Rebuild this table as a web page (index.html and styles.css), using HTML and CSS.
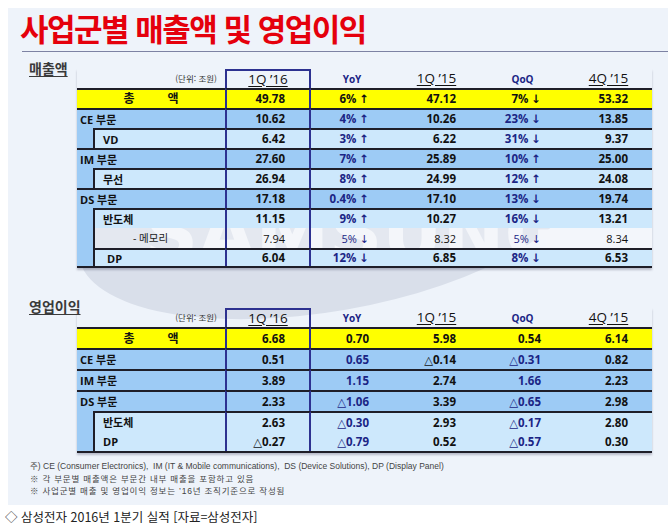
FILE: index.html
```html
<!DOCTYPE html>
<html lang="ko">
<head>
<meta charset="utf-8">
<title>사업군별 매출액 및 영업이익</title>
<link rel="stylesheet" href="styles.css">
</head>
<body>
<div class="page">
  <div class="panel">
    <svg class="watermark" width="660" height="497" viewBox="0 0 660 497" aria-hidden="true">
      <ellipse cx="322" cy="205" rx="255" ry="98" transform="rotate(-10 322 205)" class="wm-shape"/>
      <text x="347" y="252" text-anchor="middle" class="wm-text">SAMSUNG</text>
    </svg>
    <div class="content">
      <h1 class="title">사업군별 매출액 및 영업이익</h1>
      <div class="rule"></div>

      <section class="sec sec1">
        <h2 class="sec-title">매출액</h2>
        <div class="tbl t1">
          <div class="c lbl unit">(단위: 조원)</div>
          <div class="c hd q1 top"><span class="u">1Q ’16</span></div>
          <div class="c hd"><span class="sm">YoY</span></div>
          <div class="c hd"><span class="u">1Q ’15</span></div>
          <div class="c hd"><span class="sm">QoQ</span></div>
          <div class="c hd"><span class="u">4Q ’15</span></div>

          <div class="c lbl tot bt center"><span class="gap">총</span><span>액</span></div>
          <div class="c tot bt q1">49.78</div>
          <div class="c tot bt">6% ↑</div>
          <div class="c tot bt">47.12</div>
          <div class="c tot bt">7% ↓</div>
          <div class="c tot bt">53.32</div>

          <div class="c lbl grp bt">CE 부문</div>
          <div class="c grp bt q1">10.62</div>
          <div class="c grp bt n">4% ↑</div>
          <div class="c grp bt">10.26</div>
          <div class="c grp bt n">23% ↓</div>
          <div class="c grp bt">13.85</div>

          <div class="strip s1"></div>
          <div class="c sl sub bt">VD</div>
          <div class="c sub bt q1">6.42</div>
          <div class="c sub bt n">3% ↑</div>
          <div class="c sub bt">6.22</div>
          <div class="c sub bt n">31% ↓</div>
          <div class="c sub bt">9.37</div>

          <div class="c lbl grp bt">IM 부문</div>
          <div class="c grp bt q1">27.60</div>
          <div class="c grp bt n">7% ↑</div>
          <div class="c grp bt">25.89</div>
          <div class="c grp bt n">10% ↑</div>
          <div class="c grp bt">25.00</div>

          <div class="strip s1"></div>
          <div class="c sl sub bt">무선</div>
          <div class="c sub bt q1">26.94</div>
          <div class="c sub bt n">8% ↑</div>
          <div class="c sub bt">24.99</div>
          <div class="c sub bt n">12% ↑</div>
          <div class="c sub bt">24.08</div>

          <div class="c lbl grp bt">DS 부문</div>
          <div class="c grp bt q1">17.18</div>
          <div class="c grp bt n">0.4% ↑</div>
          <div class="c grp bt">17.10</div>
          <div class="c grp bt n">13% ↓</div>
          <div class="c grp bt">19.74</div>

          <div class="strip s3"></div>
          <div class="c sl sub bt">반도체</div>
          <div class="c sub bt q1">11.15</div>
          <div class="c sub bt n">9% ↑</div>
          <div class="c sub bt">10.27</div>
          <div class="c sub bt n">16% ↓</div>
          <div class="c sub bt">13.21</div>

          <div class="c sl mem memlbl">- 메모리</div>
          <div class="c mem q1">7.94</div>
          <div class="c mem n">5% ↓</div>
          <div class="c mem">8.32</div>
          <div class="c mem n">5% ↓</div>
          <div class="c mem">8.34</div>

          <div class="c sl sub bt dp">DP</div>
          <div class="c sub bt q1">6.04</div>
          <div class="c sub bt n">12% ↓</div>
          <div class="c sub bt">6.85</div>
          <div class="c sub bt n">8% ↓</div>
          <div class="c sub bt">6.53</div>
        </div>
      </section>

      <section class="sec sec2">
        <h2 class="sec-title">영업이익</h2>
        <div class="tbl t2">
          <div class="c lbl unit">(단위: 조원)</div>
          <div class="c hd q1 top"><span class="u">1Q ’16</span></div>
          <div class="c hd"><span class="sm">YoY</span></div>
          <div class="c hd"><span class="u">1Q ’15</span></div>
          <div class="c hd"><span class="sm">QoQ</span></div>
          <div class="c hd"><span class="u">4Q ’15</span></div>

          <div class="c lbl tot bt center"><span class="gap">총</span><span>액</span></div>
          <div class="c tot bt q1">6.68</div>
          <div class="c tot bt">0.70</div>
          <div class="c tot bt">5.98</div>
          <div class="c tot bt">0.54</div>
          <div class="c tot bt">6.14</div>

          <div class="c lbl grp bt">CE 부문</div>
          <div class="c grp bt q1">0.51</div>
          <div class="c grp bt n">0.65</div>
          <div class="c grp bt">△0.14</div>
          <div class="c grp bt n">△0.31</div>
          <div class="c grp bt">0.82</div>

          <div class="c lbl grp bt">IM 부문</div>
          <div class="c grp bt q1">3.89</div>
          <div class="c grp bt n">1.15</div>
          <div class="c grp bt">2.74</div>
          <div class="c grp bt n">1.66</div>
          <div class="c grp bt">2.23</div>

          <div class="c lbl grp bt">DS 부문</div>
          <div class="c grp bt q1">2.33</div>
          <div class="c grp bt n">△1.06</div>
          <div class="c grp bt">3.39</div>
          <div class="c grp bt n">△0.65</div>
          <div class="c grp bt">2.98</div>

          <div class="strip s2"></div>
          <div class="c sl sub bt">반도체</div>
          <div class="c sub bt q1">2.63</div>
          <div class="c sub bt n">△0.30</div>
          <div class="c sub bt">2.93</div>
          <div class="c sub bt n">△0.17</div>
          <div class="c sub bt">2.80</div>

          <div class="c sl sub">DP</div>
          <div class="c sub q1">△0.27</div>
          <div class="c sub n">△0.79</div>
          <div class="c sub">0.52</div>
          <div class="c sub n">△0.57</div>
          <div class="c sub">0.30</div>
        </div>
      </section>

      <div class="notes">
        <p>주) CE (Consumer Electronics),&nbsp; IM (IT &amp; Mobile communications),&nbsp; DS (Device Solutions), DP (Display Panel)</p>
        <p class="ko">※ 각 부문별 매출액은 부문간 내부 매출을 포함하고 있음</p>
        <p class="ko">※ 사업군별 매출 및 영업이익 정보는 ’16년 조직기준으로 작성됨</p>
      </div>
    </div>
  </div>
  <p class="caption">◇ 삼성전자 2016년 1분기 실적 [자료=삼성전자]</p>
</div>
</body>
</html>
```

FILE: styles.css
```css
html, body {
  margin: 0;
  padding: 0;
  background: #ffffff;
}

body {
  font-family: "Open Sans", "DejaVu Sans", "Noto Sans CJK KR", sans-serif;
  color: #111;
}

.page {
  width: 668px;
}

.panel {
  position: relative;
  margin: 8px 0 0 8px;
  width: 660px;
  height: 497px;
  padding-top: 2px;
  box-sizing: border-box;
  background: #eef3fa;
}

.watermark {
  position: absolute;
  left: 0;
  top: 0;
  z-index: 0;
}

.wm-shape {
  fill: #d9dfea;
}

.wm-text {
  font-family: "DejaVu Sans", sans-serif;
  font-weight: 700;
  font-size: 74px;
  fill: #f0f3f8;
}

.content {
  position: relative;
  z-index: 1;
}

.title {
  margin: 0 0 0 12px;
  font-family: "Noto Sans CJK KR", sans-serif;
  font-weight: 700;
  font-size: 31px;
  line-height: 36px;
  letter-spacing: -1.5px;
  color: #e5000c;
  white-space: nowrap;
}

.rule {
  margin: 5px 0 0 14px;
  height: 1px;
  background: #7d82a3;
}

.sec {
  display: flex;
  align-items: flex-start;
}

.sec1 {
  margin-top: 8px;
}

.sec2 {
  margin-top: 30px;
}

.sec-title {
  flex: 0 0 48px;
  width: 48px;
  margin: 0 0 0 21px;
  font-family: "Noto Sans CJK KR", sans-serif;
  font-weight: 700;
  font-size: 14px;
  line-height: 16px;
  color: #3a3a3a;
  text-decoration: underline;
  text-underline-offset: 2px;
  white-space: nowrap;
}

.tbl {
  display: grid;
  grid-template-columns: 16px 132px 86px 82px 87px 85px 87px;
  border-bottom: 2px solid #1e1e28;
  box-shadow: 0 2px 2px rgba(60, 60, 90, 0.3);
}

.t1 {
  margin-top: 9px;
  grid-template-rows: 19px repeat(8, 20px) 18px;
}

.t2 {
  margin-top: 10px;
  grid-template-rows: 19px repeat(5, 21px) 19px;
}

.c {
  box-sizing: border-box;
  display: flex;
  align-items: center;
  justify-content: flex-end;
  padding-right: 24px;
  white-space: nowrap;
  font-family: "Open Sans", "DejaVu Sans", "Noto Sans CJK KR", sans-serif;
  font-weight: 700;
  font-size: 11.5px;
  line-height: 1;
  color: #111;
}

.n {
  color: #1b2585;
}

.bt {
  border-top: 2px solid #1e1e28;
}

.q1 {
  border-left: 2px solid #2d3190;
  border-right: 2px solid #2d3190;
}

.q1.top {
  border-top: 2px solid #2d3190;
}

.tot {
  background: #ffff00;
}

.grp {
  background: #9dcbf5;
}

.sub {
  background: #cde8fc;
}

.mem {
  background: rgba(255, 255, 255, 0.3);
  font-weight: 400;
  font-size: 11px;
}

.strip {
  background: #9dcbf5;
}

.s1 { grid-row: span 1; }
.s2 { grid-row: span 2; }
.s3 { grid-row: span 3; }

.lbl {
  grid-column: span 2;
  justify-content: flex-start;
  padding: 0 0 0 3px;
  font-size: 11px;
}

.lbl.center {
  justify-content: center;
  padding: 0;
  font-size: 12px;
}

.gap {
  margin-right: 33px;
}

.sl {
  justify-content: flex-start;
  padding: 0 0 0 8px;
  border-left: 2px solid #1e1e28;
  font-size: 11px;
}

.memlbl {
  padding-left: 38px;
  font-weight: 400;
  font-size: 10.5px;
  color: #222;
}

.dp {
  padding-left: 12px;
}

.unit {
  justify-content: flex-end;
  padding: 0 8px 0 0;
  font-family: "Noto Sans CJK KR", sans-serif;
  font-weight: 400;
  font-size: 8.5px;
  color: #333;
}

.hd {
  justify-content: center;
  padding: 0;
}

.u {
  font-family: "Open Sans", sans-serif;
  font-weight: 400;
  font-size: 13.5px;
  color: #111;
  text-decoration: underline;
  text-underline-offset: 2px;
}

.sm {
  font-family: "Open Sans", sans-serif;
  font-weight: 700;
  font-size: 10px;
  color: #1b2585;
}

.notes {
  margin: 7px 0 0 22px;
  font-family: "Liberation Sans", "Noto Sans CJK KR", sans-serif;
  font-size: 8.5px;
  line-height: 12.5px;
  color: #444;
}

.notes p {
  margin: 0;
  white-space: nowrap;
}

.notes .ko {
  letter-spacing: 0.8px;
}

.caption {
  margin: 3px 0 0 5px;
  font-family: "Noto Sans CJK KR", sans-serif;
  font-size: 12.5px;
  line-height: 18px;
  color: #222;
}
```
